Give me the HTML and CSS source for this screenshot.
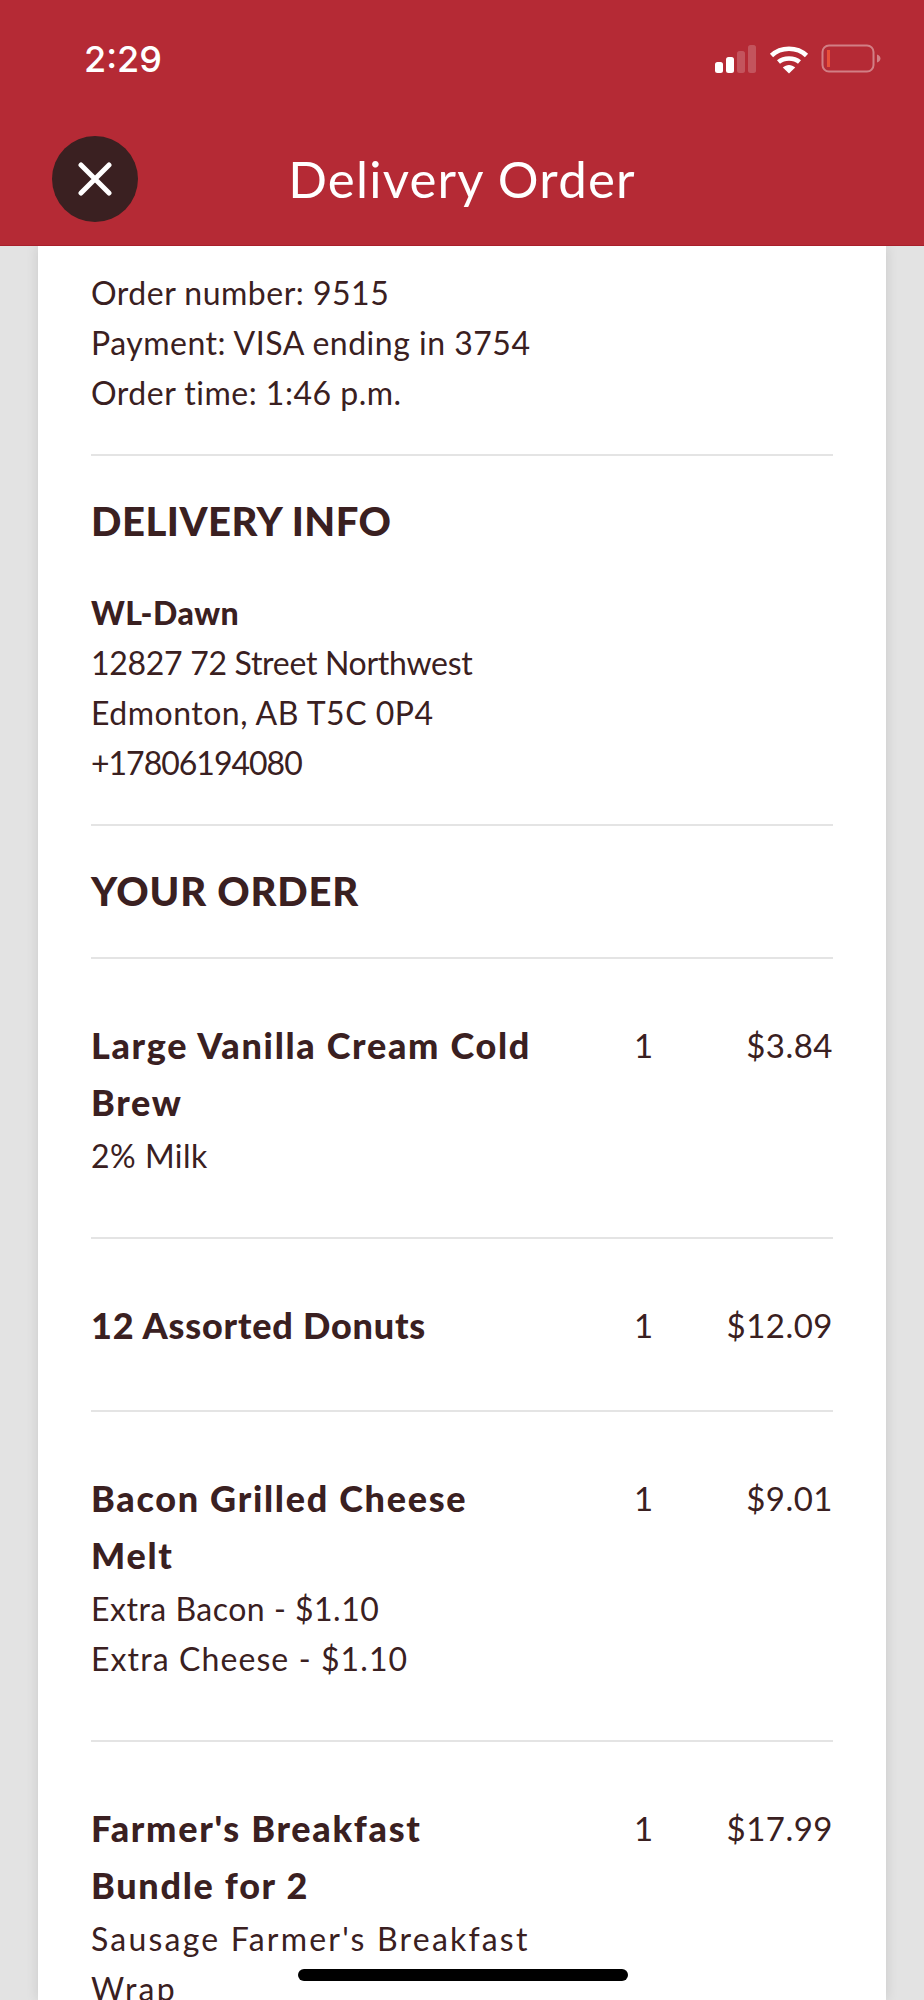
FILE: index.html
```html
<!DOCTYPE html>
<html lang="en">
<head>
<meta charset="UTF-8">
<meta name="viewport" content="width=device-width, initial-scale=1.0">
<title>Delivery Order</title>
<link rel="stylesheet" href="styles.css">
</head>
<body>
<div class="screen">
  <header class="top-bar">
    <div class="status-bar">
      <span class="clock">2:29</span>
      <div class="status-icons">
        <svg class="signal" width="42" height="28" viewBox="0 0 42 28">
          <rect x="0" y="17" width="8" height="11" rx="2.5" fill="#fff"/>
          <rect x="11" y="12" width="8" height="16" rx="2.5" fill="#fff"/>
          <rect x="22" y="6" width="8" height="22" rx="2.5" fill="#fff" fill-opacity=".2"/>
          <rect x="33" y="0" width="8" height="28" rx="2.5" fill="#fff" fill-opacity=".2"/>
        </svg>
        <svg class="wifi" width="40" height="30" viewBox="0 0 40 30">
          <path d="M2.5 11.5C11.8 2.5 28.2 2.500 37.500 11.500" fill="none" stroke="#fff" stroke-width="4.600"/>
          <path d="M9.500 18C15 13.300 25 13.300 30.500 18" fill="none" stroke="#fff" stroke-width="4.600"/>
          <path d="M13.800 23.500C17.500 20 22.500 20 26.200 23.500L20 29.500Z" fill="#fff"/>
        </svg>
        <svg class="battery" width="60" height="30" viewBox="0 0 60 30">
          <rect x="1.500" y="1.500" width="51" height="26" rx="6.500" fill="none" stroke="#fff" stroke-opacity=".4" stroke-width="2"/>
          <rect x="6" y="6" width="3" height="17" fill="#e8503a"/>
          <path d="M56 10.500C58.500 11.500 59.500 13 59.500 14.500C59.500 16 58.500 17.500 56 18.500Z" fill="#fff" fill-opacity=".4"/>
        </svg>
      </div>
    </div>
    <div class="title-row">
      <button class="close-btn">
        <svg width="34" height="34" viewBox="0 0 34 34">
          <path d="M3 3L31 31M31 3L3 31" stroke="#fff" stroke-width="5" stroke-linecap="round"/>
        </svg>
      </button>
      <h1 class="title">Delivery Order</h1>
    </div>
  </header>

  <main class="receipt">
    <section class="meta">
      <p>Order number: 9515</p>
      <p>Payment: VISA ending in 3754</p>
      <p>Order time: 1:46 p.m.</p>
    </section>

    <section class="delivery">
      <h2>DELIVERY INFO</h2>
      <p class="strong">WL-Dawn</p>
      <p class="street">12827 72 Street Northwest</p>
      <p>Edmonton, AB T5C 0P4</p>
      <p class="phone">+17806194080</p>
    </section>

    <section class="order-head">
      <h2>YOUR ORDER</h2>
    </section>

    <div class="item">
      <div class="item-info">
        <h3>Large Vanilla Cream Cold Brew</h3>
        <p>2% Milk</p>
      </div>
      <span class="qty">1</span>
      <span class="price">$3.84</span>
    </div>
    <div class="item">
      <div class="item-info">
        <h3 class="tight">12 Assorted Donuts</h3>
      </div>
      <span class="qty">1</span>
      <span class="price">$12.09</span>
    </div>
    <div class="item">
      <div class="item-info">
        <h3>Bacon Grilled Cheese Melt</h3>
        <p>Extra Bacon - $1.10</p>
        <p class="wide">Extra Cheese - $1.10</p>
      </div>
      <span class="qty">1</span>
      <span class="price">$9.01</span>
    </div>
    <div class="item">
      <div class="item-info">
        <h3>Farmer's Breakfast Bundle for 2</h3>
        <p class="wider">Sausage Farmer's Breakfast Wrap</p>
      </div>
      <span class="qty">1</span>
      <span class="price">$17.99</span>
    </div>
  </main>

  <div class="home-indicator"></div>
</div>
</body>
</html>
```
FILE: styles.css
```css
html, body {
  margin: 0;
  padding: 0;
}

body {
  font-family: Lato, "Liberation Sans", sans-serif;
  color: #3a2021;
  background-color: #e3e3e3;
}

.screen {
  position: relative;
  height: 2000px;
  overflow: hidden;
}

h1, h2, h3, p {
  margin: 0;
}

.top-bar {
  position: relative;
  z-index: 2;
  height: 245px;
  background-color: #b52a35;
  border-bottom: 1px solid #a81f2b;
  color: #fff;
}

.status-bar {
  display: flex;
  justify-content: space-between;
  align-items: center;
  height: 44px;
  padding: 37px 43px 0 84px;
}

.clock {
  font-family: Inter, "Liberation Sans", sans-serif;
  font-size: 36px;
  font-weight: 500;
}

.status-icons {
  display: flex;
  align-items: center;
  gap: 12px;
}

.title-row {
  position: relative;
  display: flex;
  justify-content: center;
  align-items: center;
  height: 86px;
  margin-top: 55px;
}

.close-btn {
  position: absolute;
  left: 52px;
  top: 0;
  display: flex;
  justify-content: center;
  align-items: center;
  width: 86px;
  height: 86px;
  padding: 0;
  border: none;
  border-radius: 50%;
  background-color: #3a2021;
}

.title {
  font-size: 51px;
  font-weight: 400;
  line-height: 82px;
  letter-spacing: 1.2px;
}

.receipt {
  width: 742px;
  height: 1754px;
  margin: 0 auto;
  padding: 0 53px;
  background-color: #fff;
  box-shadow: 0 0 12px rgba(0, 0, 0, 0.12);
  font-size: 32px;
  line-height: 50px;
  letter-spacing: 0.5px;
}

.meta {
  padding: 22px 0 36px;
  border-bottom: 2px solid #e4e4e4;
}

.delivery {
  padding: 0 0 36px;
  border-bottom: 2px solid #e4e4e4;
}

h2 {
  font-size: 40px;
  font-weight: 900;
  letter-spacing: 0.8px;
  line-height: 50px;
}

.delivery h2 {
  padding: 40px 0 42px;
  letter-spacing: 0.5px;
}

.strong {
  font-weight: 900;
}

.street {
  letter-spacing: -0.3px;
}

.phone {
  letter-spacing: -1px;
}

.order-head {
  border-bottom: 2px solid #e4e4e4;
}

.order-head h2 {
  padding: 40px 0 41px;
}

.item {
  display: flex;
  align-items: flex-start;
  padding: 58px 0 56px;
  border-bottom: 2px solid #e4e4e4;
}

.item-info {
  width: 455px;
  margin-right: 88px;
}

.item-info h3 {
  font-size: 36px;
  font-weight: 900;
  line-height: 57px;
  letter-spacing: 1.7px;
}

.item-info h3.tight {
  letter-spacing: 0.8px;
}

.item-info p {
  line-height: 50px;
}

.item-info p.wide {
  letter-spacing: 1.1px;
}

.item-info p.wider {
  letter-spacing: 2.2px;
}

.qty {
  width: 30px;
  line-height: 57px;
  font-size: 33px;
}

.price {
  flex: 1;
  text-align: right;
  line-height: 57px;
  font-size: 33px;
}

.home-indicator {
  position: absolute;
  left: 298px;
  top: 1969px;
  width: 330px;
  height: 12px;
  border-radius: 6px;
  background-color: #000;
}
```
